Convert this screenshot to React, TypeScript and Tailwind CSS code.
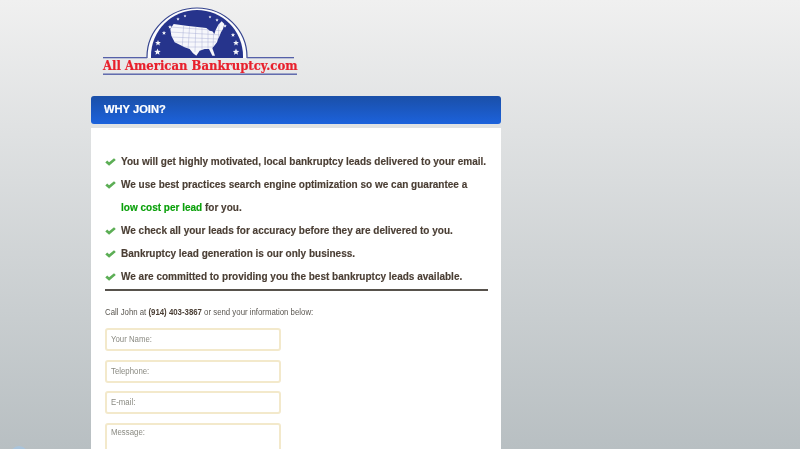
import React from "react";

const items: React.ReactNode[] = [
  "You will get highly motivated, local bankruptcy leads delivered to your email.",
  "We use best practices search engine optimization so we can guarantee a",
  <><span className="text-[#0aa00a] [-webkit-text-stroke:0.15px_#0aa00a]">low cost per lead</span> for you.</>,
  "We check all your leads for accuracy before they are delivered to you.",
  "Bankruptcy lead generation is our only business.",
  "We are committed to providing you the best bankruptcy leads available.",
];

function Check() {
  return (
    <svg width="11" height="8" viewBox="0 0 11 10" preserveAspectRatio="none" className="shrink-0">
      <path d="M0.3 5.5 L2.2 3.2 L4.1 5.2 L9 0.3 L10.8 2.4 L4.1 9.8 Z" fill="#5cae55" />
    </svg>
  );
}

function Star({ x, y, r = 3 }: { x: number; y: number; r?: number }) {
  const pts = Array.from({ length: 10 }, (_, i) => {
    const a = -Math.PI / 2 + (i * Math.PI) / 5;
    const rr = i % 2 ? r * 0.45 : r;
    return `${x + rr * Math.cos(a)},${y + rr * Math.sin(a)}`;
  }).join(" ");
  return <polygon points={pts} fill="#f4f5fa" />;
}

const mapCrop = [
  [92, 60], [130, 65], [170, 70], [190, 72], [200, 80], [208, 82], [214, 90], [218, 78], [226, 62], [236, 52],
  [244, 60], [240, 75], [234, 85], [230, 95], [225, 105], [222, 115], [214, 125], [208, 132], [216, 155],
  [208, 155], [198, 135], [185, 135], [170, 140], [160, 155], [150, 148], [140, 135], [125, 130], [110, 122],
  [95, 115], [85, 95], [82, 75],
];
const mapPts = mapCrop.map(([x, y]) => `${x / 3 + 43},${y / 3 + 4}`).join(" ");

function Logo() {
  return (
    <div className="relative ml-[9px] h-[80px] w-[200px]">
      <svg width="200" height="80" viewBox="0 0 200 80" className="blur-[0.4px]">
        <defs>
          <clipPath id="usa">
            <polygon points={mapPts} />
          </clipPath>
        </defs>
        <path d="M47 58 L47 57 A50 49 0 0 1 147 57 L147 58" fill="#fdfdfe" stroke="#36458f" strokeWidth="1.2" />
        <path d="M51 58 L51 56 A46 46 0 0 1 143 56 L143 58 Z" fill="#26348c" />
        <polygon points={mapPts} fill="#f6f7fb" />
        <g clipPath="url(#usa)" stroke="#a6acd4" strokeWidth="0.45" fill="none">
          <path d="M70 27 L125 31 M70 32 L122 35 M70 37 L118 39 M72 42 L116 42 M78 47 L116 47 M84 20 L82 50 M90 20 L88 50 M96 20 L95 52 M102 20 L102 52 M108 20 L108 50 M114 20 L113 50 M119 20 L118 50" />
        </g>
        <Star x={57.5} y={52} r={3.4} />
        <Star x={58} y={43} r={3} />
        <Star x={64} y={33} r={2.2} />
        <Star x={70} y={27} r={2} />
        <Star x={78} y={19} r={1.7} />
        <Star x={85} y={16} r={1.5} />
        <Star x={110} y={17} r={1.5} />
        <Star x={117} y={20} r={1.7} />
        <Star x={125} y={26} r={1.8} />
        <Star x={133} y={35} r={2.2} />
        <Star x={136} y={43} r={3} />
        <Star x={136} y={52} r={3.4} />
        <rect x="3" y="57" width="44" height="1.3" fill="#5560a8" />
        <rect x="147" y="57" width="47" height="1.3" fill="#5560a8" />
        <rect x="3" y="73.5" width="194" height="1.4" fill="#5560a8" />
      </svg>
      <div className="absolute left-[3px] top-[56px] w-[194px] text-[12.5px] leading-[19px] font-bold whitespace-nowrap text-[#e8202c] blur-[0.3px] [-webkit-text-stroke:0.2px_#e8202c] [font-family:'DejaVu_Serif',serif]">
        <span className="inline-block origin-left scale-x-[0.933]">All American Bankruptcy.com</span>
      </div>
    </div>
  );
}

function Field({ label, tall }: { label: string; tall?: boolean }) {
  return (
    <div
      className={`w-[176px] rounded-[3px] border-2 border-[#f3e9cb] bg-white pl-[4px] text-[8.5px] text-[#8a8a82] ${
        tall ? "h-[60px] shrink-0 pt-[1px] leading-[13px]" : "h-[23px] leading-[19px]"
      }`}
    >
      <span className="inline-block origin-left scale-x-[0.92]">{label}</span>
    </div>
  );
}

export default function App() {
  return (
    <div className="relative h-[449px] w-full overflow-hidden bg-gradient-to-b from-[#f0f0f0] to-[#b8bfc2] [font-family:'Liberation_Sans',Arial,sans-serif]">
      <div className="ml-[91px] w-[410px]">
        <div className="h-[96px]">
          <Logo />
        </div>
        <div className="flex h-[28px] items-center rounded-[3px] bg-gradient-to-b from-[#1a4fa8] to-[#1c62dc] pl-[13px] text-[11.5px] font-bold text-white">
          <span className="inline-block origin-left scale-x-[0.97] blur-[0.2px] [-webkit-text-stroke:0.2px_#ffffff]">WHY JOIN?</span>
        </div>
        <div className="mt-[4px] h-[330px] bg-white pt-[22px] pl-[14px] pr-[13px]">
          <div className="border-b-2 border-[#57524c] pb-[1px] blur-[0.25px]">
            {items.map((t, i) => (
              <div key={i} className={`flex h-[23px] items-center text-[10.5px] font-bold text-[#4a3e34] [-webkit-text-stroke:0.15px_#4a3e34] ${i === 2 ? "pl-[16px]" : "gap-[5px]"}`}>
                {i !== 2 && <Check />}
                <span className="inline-block origin-left scale-x-[0.953] whitespace-nowrap">{t}</span>
              </div>
            ))}
          </div>
          <p className="mt-[16px] whitespace-nowrap text-[8.2px] leading-[12px] text-[#5a5650] blur-[0.25px]">
            <span className="inline-block origin-left scale-x-[0.955]">
              Call John at <b className="text-[#4a3e34]">(914) 403-3867</b> or send your information below:
            </span>
          </p>
          <div className="mt-[9px] flex flex-col gap-[8.5px] blur-[0.25px]">
            <Field label="Your Name:" />
            <Field label="Telephone:" />
            <Field label="E-mail:" />
            <Field label="Message:" tall />
          </div>
        </div>
      </div>
      <div className="absolute left-[10px] top-[446px] h-[18px] w-[18px] rounded-full bg-[#a9c4dc]" />
    </div>
  );
}
